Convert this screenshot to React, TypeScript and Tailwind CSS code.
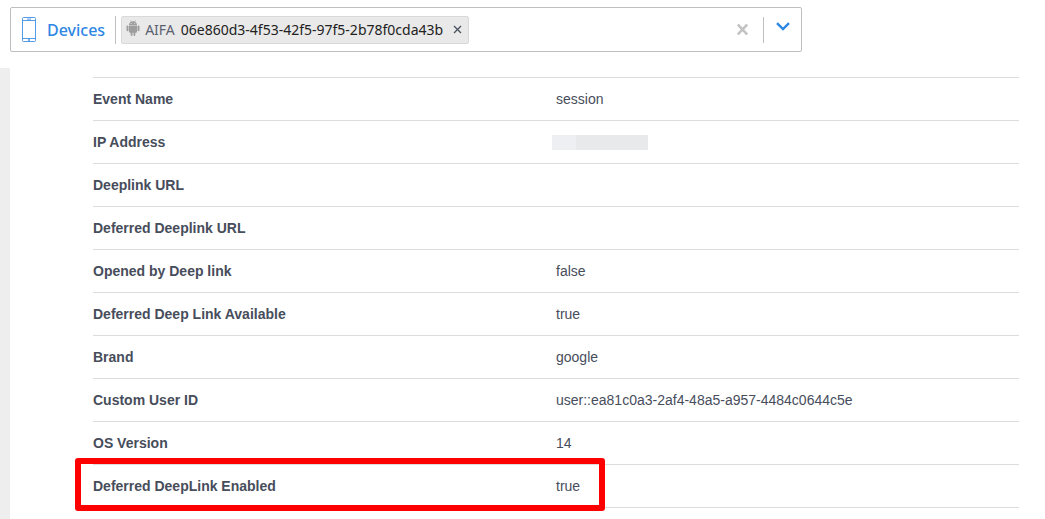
import { ReactNode } from 'react';

interface Detail {
  label: string;
  value?: ReactNode;
  highlighted?: boolean;
}

const details: Detail[] = [
  { label: 'Event Name', value: 'session' },
  { label: 'IP Address', value: <MaskedValue /> },
  { label: 'Deeplink URL' },
  { label: 'Deferred Deeplink URL' },
  { label: 'Opened by Deep link', value: 'false' },
  { label: 'Deferred Deep Link Available', value: 'true' },
  { label: 'Brand', value: 'google' },
  { label: 'Custom User ID', value: 'user::ea81c0a3-2af4-48a5-a957-4484c0644c5e' },
  { label: 'OS Version', value: '14' },
  { label: 'Deferred DeepLink Enabled', value: 'true', highlighted: true },
];

function MaskedValue() {
  return (
    <div className="-ml-1 flex h-[15px] w-24" role="img" aria-label="Hidden IP address">
      <div className="w-6 bg-[#eeeff2]" />
      <div className="flex-1 bg-[#e8e9eb]" />
    </div>
  );
}

function PhoneIcon() {
  return (
    <svg className="h-[26px] w-4 shrink-0" viewBox="0 0 16 26" fill="none" stroke="#3f90e6" aria-hidden="true">
      <rect x="1.5" y="0.5" width="13" height="24" rx="1" strokeWidth="0.9" />
      <path d="M1.5 3.5h13M1.5 21.5h13" strokeWidth="0.9" />
      <path d="M6 2.1h4" strokeWidth="0.9" />
      <path d="M7 23h2" strokeWidth="1.6" />
    </svg>
  );
}

function AndroidIcon() {
  return (
    <svg className="mb-1 h-4 w-[14px] shrink-0" viewBox="0 0 14 16" fill="#9d9d9d" aria-hidden="true">
      <path
        fillRule="evenodd"
        d="M3 5.1C3 3.6 3.8 2.4 5 1.7L4.3.5l.4-.3.8 1.3a4.4 4.4 0 0 1 3 0L9.3.2l.4.3L9 1.7c1.2.7 2 1.9 2 3.4zM5.2 3a.5.5 0 1 0 0 1 .5.5 0 0 0 0-1zM8.8 3a.5.5 0 1 0 0 1 .5.5 0 0 0 0-1z"
      />
      <path d="M3 5.6h8v6.1a1 1 0 0 1-1 1h-.7V15a.9.9 0 0 1-1.8 0v-2.3h-1V15a.9.9 0 0 1-1.8 0v-2.3H4a1 1 0 0 1-1-1z" />
      <rect x="0.5" y="5.4" width="2" height="5.8" rx="1" />
      <rect x="11.5" y="5.4" width="2" height="5.8" rx="1" />
    </svg>
  );
}

function DeviceSelector() {
  return (
    <div className="flex h-[45px] max-w-[792px] items-center rounded-[2px] border border-[#bfbfbf] bg-white font-['Noto_Sans',sans-serif]">
      <div className="flex items-center gap-[10px] pl-[10px]">
        <PhoneIcon />
        <span className="text-base leading-6 font-medium text-[#2d86e4]">Devices</span>
      </div>
      <div className="ml-[10px] h-7 w-px bg-[#bfbfbf]" />
      <div className="ml-[5px] flex h-7 items-center rounded-[2px] border border-[#d9d9d9] bg-[#e9e9e9] pr-[6px] pl-1 text-sm">
        <AndroidIcon />
        <span className="ml-[5px] text-[#5b6170]">AIFA</span>
        <span className="ml-[6px] text-[#222222]">06e860d3-4f53-42f5-97f5-2b78f0cda43b</span>
        <button type="button" aria-label="Remove device" className="ml-[10px]">
          <svg className="size-[9px]" viewBox="0 0 9 9" stroke="#4a5060" strokeWidth="1.3" aria-hidden="true">
            <path d="M1 1l7 7M8 1l-7 7" />
          </svg>
        </button>
      </div>
      <button type="button" aria-label="Clear selection" className="mr-[15px] ml-auto">
        <svg className="size-[11px]" viewBox="0 0 11 11" stroke="#c3c3c3" strokeWidth="2.6" aria-hidden="true">
          <path d="M.8.5l9.4 10M10.2.5l-9.4 10" />
        </svg>
      </button>
      <div className="h-[26px] w-px bg-[#bfbfbf]" />
      <button type="button" aria-label="Open device list" className="flex h-full w-[37px] justify-center pt-[14px]">
        <svg className="h-[9px] w-[14px]" viewBox="0 0 14 9" fill="none" stroke="#2d86e4" strokeWidth="2.4" aria-hidden="true">
          <path d="M1 1.2l6 5.8 6-5.8" />
        </svg>
      </button>
    </div>
  );
}

function DetailsTable() {
  return (
    <table className="w-full table-fixed border-collapse text-left text-sm text-[#474d5b]">
      <tbody>
        {details.map(({ label, value, highlighted }) => (
          <tr key={label} className="relative h-[43px] border-y border-[#dcdcdc]">
            <th scope="row" className="p-0 font-bold">
              {label}
              {highlighted && (
                <div className="pointer-events-none absolute -top-2 -left-[18px] h-[53px] w-[calc(50%+67px)] rounded-[3px] border-[6px] border-[#ff0000]" />
              )}
            </th>
            <td className="p-0">{value}</td>
          </tr>
        ))}
      </tbody>
    </table>
  );
}

export default function App() {
  return (
    <div className="flex min-h-screen flex-col bg-white font-['Liberation_Sans',Arial,sans-serif]">
      <header className="px-[10px] pt-[7px] pb-4">
        <DeviceSelector />
      </header>
      <main className="flex-1 border-l-[10px] border-[#eeeeee] pt-[9px] pr-[26px] pl-[83px]">
        <DetailsTable />
      </main>
    </div>
  );
}
